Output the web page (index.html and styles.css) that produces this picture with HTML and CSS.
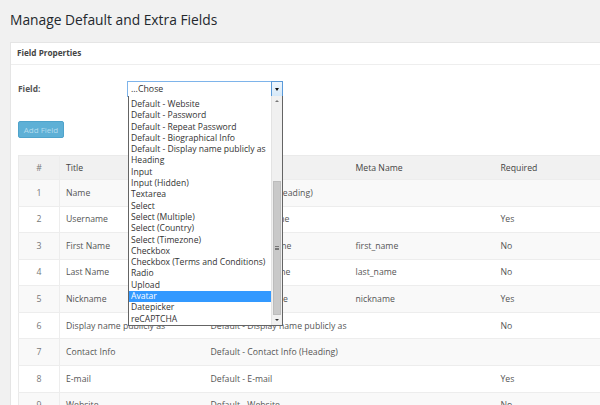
FILE: index.html
```html
<!DOCTYPE html>
<html>
<head>
<meta charset="utf-8">
<link rel="stylesheet" href="styles.css">
</head>
<body>
<h1 class="page-title">Manage Default and Extra Fields</h1>
<div class="panel">
  <div class="panel-head">Field Properties</div>
  <div class="panel-body">
    <div class="field-row">
      <label class="field-label">Field:</label>
      <div class="select-wrap">
        <div class="select-box">
          <span class="select-value">...Chose</span>
          <span class="select-btn"><span class="tri-down"></span></span>
        </div>
        <div class="dropdown">
          <ul class="options">
            <li>Default - Website</li>
            <li>Default - Password</li>
            <li>Default - Repeat Password</li>
            <li>Default - Biographical Info</li>
            <li>Default - Display name publicly as</li>
            <li>Heading</li>
            <li>Input</li>
            <li>Input (Hidden)</li>
            <li>Textarea</li>
            <li>Select</li>
            <li>Select (Multiple)</li>
            <li>Select (Country)</li>
            <li>Select (Timezone)</li>
            <li>Checkbox</li>
            <li>Checkbox (Terms and Conditions)</li>
            <li>Radio</li>
            <li>Upload</li>
            <li class="selected">Avatar</li>
            <li>Datepicker</li>
            <li>reCAPTCHA</li>
          </ul>
          <div class="scrollbar">
            <span class="sb-up"></span>
            <div class="sb-track"><div class="sb-thumb"><span class="grip"></span></div></div>
            <span class="sb-down"></span>
          </div>
        </div>
      </div>
    </div>
    <button class="add-btn">Add Field</button>
    <table class="fields">
      <colgroup>
        <col class="w-num"><col class="w-col"><col class="w-col"><col class="w-col"><col>
      </colgroup>
      <thead>
        <tr><th class="c-num">#</th><th>Title</th><th>Type</th><th>Meta Name</th><th>Required</th></tr>
      </thead>
      <tbody>
        <tr><td class="c-num">1</td><td>Name</td><td>Default - Name (Heading)</td><td></td><td></td></tr>
        <tr><td class="c-num">2</td><td>Username</td><td>Default - Username</td><td></td><td>Yes</td></tr>
        <tr><td class="c-num">3</td><td>First Name</td><td>Default - First Name</td><td>first_name</td><td>No</td></tr>
        <tr><td class="c-num">4</td><td>Last Name</td><td>Default - Last Name</td><td>last_name</td><td>No</td></tr>
        <tr><td class="c-num">5</td><td>Nickname</td><td>Default - Nickname</td><td>nickname</td><td>Yes</td></tr>
        <tr><td class="c-num">6</td><td>Display name publicly as</td><td>Default - Display name publicly as</td><td></td><td>No</td></tr>
        <tr><td class="c-num">7</td><td>Contact Info</td><td>Default - Contact Info (Heading)</td><td></td><td></td></tr>
        <tr><td class="c-num">8</td><td>E-mail</td><td>Default - E-mail</td><td></td><td>Yes</td></tr>
        <tr><td class="c-num">9</td><td>Website</td><td>Default - Website</td><td></td><td>No</td></tr>
      </tbody>
    </table>
  </div>
</div>
</body>
</html>
```
FILE: styles.css
```css
html, body {
  margin: 0;
  padding: 0;
}
body {
  background: #f1f1f1;
  font-family: "Open Sans", "DejaVu Sans", sans-serif;
  color: #444;
  width: 600px;
  height: 405px;
  overflow: hidden;
}
.page-title {
  margin: 0;
  padding: 10px 0 0 10px;
  height: 42px;
  box-sizing: border-box;
  font-size: 13.8px;
  font-weight: 400;
  line-height: 20px;
  color: #23282d;
}
.panel {
  margin-left: 10px;
  width: 620px;
  background: #fff;
  border: 1px solid #e5e5e5;
  border-bottom: none;
}
.panel-head {
  height: 21px;
  line-height: 20px;
  padding-left: 6px;
  font-size: 8.2px;
  font-weight: 700;
  color: #444;
  border-bottom: 1px solid #eee;
}
.panel-body {
  padding: 15px 0 0 7px;
}
.field-row {
  display: flex;
  height: 41px;
}
.field-label {
  width: 109px;
  font-size: 8.4px;
  font-weight: 700;
  color: #555;
  line-height: 14px;
  padding-top: 2px;
}
.select-wrap {
  position: relative;
  width: 156px;
}
.select-box {
  height: 16px;
  box-sizing: border-box;
  border: 1px solid #7eb4ea;
  background: #fff;
  display: flex;
  align-items: stretch;
  margin-top: 1px;
}
.select-value {
  flex: 1;
  font-size: 8.8px;
  line-height: 15px;
  padding-left: 3px;
  color: #333;
}
.select-btn {
  width: 10px;
  border: 1px solid #5a9ad9;
  margin: -1px -1px -1px 0;
  background: linear-gradient(#eef6fd, #d5e8f8);
  display: flex;
  align-items: center;
  justify-content: center;
}
.tri-down {
  width: 0;
  height: 0;
  border-left: 2.5px solid transparent;
  border-right: 2.5px solid transparent;
  border-top: 3px solid #111;
}
.dropdown {
  position: absolute;
  left: 1px;
  top: 16px;
  width: 155px;
  height: 230px;
  box-sizing: border-box;
  background: #fff;
  border: 1px solid #646464;
  border-top: none;
  display: flex;
  z-index: 5;
}
.options {
  list-style: none;
  margin: 0;
  padding: 3px 0 0 0;
  flex: 1;
}
.options li {
  height: 11.3px;
  line-height: 11.3px;
  font-size: 8.6px;
  padding-left: 2px;
  color: #333;
  white-space: nowrap;
}
.options li.selected {
  background: #3399ff;
  color: #fff;
}
.scrollbar {
  width: 10px;
  background: #f0f0f0;
  border-left: 1px solid #e3e3e3;
  display: flex;
  flex-direction: column;
  align-items: center;
}
.sb-up, .sb-down {
  height: 10px;
  width: 10px;
  position: relative;
}
.sb-up::after, .sb-down::after {
  content: "";
  position: absolute;
  left: 3px;
  top: 4px;
  border-left: 2px solid transparent;
  border-right: 2px solid transparent;
}
.sb-up::after { border-bottom: 2px solid #777; }
.sb-down::after { border-top: 2px solid #333; }
.sb-track {
  flex: 1;
  width: 10px;
  position: relative;
}
.sb-thumb {
  position: absolute;
  left: 1px;
  right: 1px;
  top: 75px;
  bottom: 0;
  background: #c9c9c9;
  border: 1px solid #bcbcbc;
  box-sizing: border-box;
  display: flex;
  align-items: center;
  justify-content: center;
}
.grip {
  width: 4px;
  height: 4px;
  border-top: 1px solid #777;
  border-bottom: 1px solid #777;
  box-sizing: border-box;
  position: relative;
}
.grip::after {
  content: "";
  position: absolute;
  left: 0;
  right: 0;
  top: 1px;
  border-top: 1px solid #777;
}
.add-btn {
  display: block;
  width: 46px;
  height: 17px;
  padding: 0;
  margin: 0 0 17px 0;
  font-family: "Open Sans", sans-serif;
  font-size: 8px;
  color: #b5dcee;
  background: #5eb0d6;
  border: 1px solid #4fa3cb;
  border-radius: 2px;
}
.fields {
  border-collapse: collapse;
  width: 610px;
  table-layout: fixed;
  font-size: 8.7px;
  color: #555;
  border: 1px solid #eaeaea;
}
.w-num { width: 41px; }
.w-col { width: 145px; }
.fields th {
  height: 23px;
  background: #f1f1f1;
  font-weight: 400;
  text-align: left;
  padding: 0 0 0 6px;
  color: #444;
}
.fields td {
  height: 25.57px;
  padding: 0 0 0 6px;
  border-top: 1px solid #ededed;
  white-space: nowrap;
  overflow: hidden;
}
.fields tbody tr:nth-child(odd) td {
  background: #f9f9f9;
}
.fields .c-num {
  padding: 0;
  text-align: center;
  color: #777;
  border-right: 1px solid #ededed;
}
```
